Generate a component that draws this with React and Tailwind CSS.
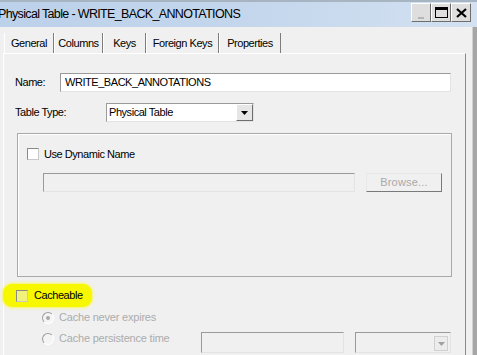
import React from "react";

// Classic sunken / raised edges used by the old Win32 dialog
const sunken = "border border-t-[#9a9a9a] border-l-[#9a9a9a] border-r-[#e3e3e3] border-b-[#e3e3e3]";
const raised = "border border-t-white border-l-white border-r-[#6e6e6e] border-b-[#6e6e6e]";

function CaptionButton({ children }) {
  return (
    <div className={`w-[20px] h-[19px] bg-[#dedede] flex items-center justify-center ${raised}`}>
      {children}
    </div>
  );
}

function Checkbox({ fill = "bg-white" }) {
  return (
    <span
      className={`inline-block w-[12px] h-[12px] shrink-0 ${fill} border border-t-[#8a8a8a] border-l-[#8a8a8a] border-r-[#c9c9c9] border-b-[#c9c9c9]`}
    />
  );
}

function Radio({ checked }) {
  return (
    <span className="w-[12px] h-[12px] shrink-0 rounded-full border border-t-[#9d9d9d] border-l-[#9d9d9d] border-r-white border-b-white bg-[#f4f4f4] flex items-center justify-center">
      {checked && <span className="w-[4px] h-[4px] rounded-full bg-[#a8a8a8]" />}
    </span>
  );
}

function DropArrow({ color = "#000" }) {
  return (
    <svg width="7" height="4" viewBox="0 0 7 4">
      <path d="M0 0h7L3.5 4z" fill={color} />
    </svg>
  );
}

const tabs = [
  { label: "General", w: "w-[50px]", active: true },
  { label: "Columns", w: "w-[49px]" },
  { label: "Keys", w: "w-[43px]" },
  { label: "Foreign Keys", w: "w-[73px]" },
  { label: "Properties", w: "w-[62px]" },
];

export default function App() {
  return (
    <div className="w-[477px] h-[355px] overflow-hidden bg-[#f0f0f0] flex flex-col font-['Liberation_Sans',Arial,sans-serif] text-[11px] tracking-[-0.45px] text-black">
      {/* title bar */}
      <div className="h-[27px] shrink-0 border-t-2 border-[#a7b4c2] bg-linear-to-r from-[#bcd1ea] via-[#c3d6ec] to-[#d3e1f1] flex justify-between">
        <span className="-ml-[2px] mt-[4px] text-[12.5px] tracking-[-0.65px] leading-[17px] whitespace-nowrap">
          Physical Table - WRITE_BACK_ANNOTATIONS
        </span>
        <div className="flex mt-[1px] mr-[6px]">
          <CaptionButton>
            <span className="mt-[10px] w-[6px] h-[2px] bg-[#b5b5b5]" />
          </CaptionButton>
          <CaptionButton>
            <span className="w-[13px] h-[11px] border border-black border-t-[3px]" />
          </CaptionButton>
          <CaptionButton>
            <svg width="11" height="10" viewBox="0 0 11 10">
              <path d="M1 1l9 8M10 1l-9 8" stroke="#000" strokeWidth="2.2" />
            </svg>
          </CaptionButton>
        </div>
      </div>

      <div className="flex flex-1">
        <div className="flex-1 flex flex-col pl-[3px] pr-[6px] pt-[6px]">
          {/* tabs */}
          <div className="flex h-[20px] pl-[1px]">
            {tabs.map((t) => (
              <div
                key={t.label}
                className={`${t.w} h-[20px] flex items-center justify-center border-l border-l-white border-r border-r-[#7d7d7d] ${
                  t.active ? "bg-[#f0f0f0]" : ""
                }`}
              >
                {t.label}
              </div>
            ))}
          </div>

          {/* tab page */}
          <div className="flex-1 border-t border-l border-white border-r border-r-[#8a8a8a] pl-[11px] pt-[19px]">
            <div className="flex items-center h-[19px]">
              <span className="w-[45px]">Name:</span>
              <div className={`w-[391px] h-[19px] bg-white flex items-center pl-[4px] ${sunken}`}>
                WRITE_BACK_ANNOTATIONS
              </div>
            </div>

            <div className="flex items-center h-[19px] mt-[11px]">
              <span className="w-[91px]">Table Type:</span>
              <div className={`w-[148px] h-[19px] bg-white flex items-center justify-between pl-[2px] ${sunken}`}>
                <span>Physical Table</span>
                <div className={`w-[17px] h-[17px] bg-[#e6e6e6] flex items-center justify-center ${raised}`}>
                  <DropArrow />
                </div>
              </div>
            </div>

            {/* group box */}
            <div className="ml-[2px] mt-[11px] w-[435px] h-[144px] border border-[#a9a9a9] shadow-[inset_1px_1px_0_#fff] pt-[14px] pl-[9px]">
              <label className="flex items-center gap-[5px] h-[12px]">
                <Checkbox />
                <span>Use Dynamic Name</span>
              </label>
              <div className="flex mt-[13px] pl-[16px] gap-[11px]">
                <div className={`w-[312px] h-[19px] bg-[#f0f0f0] ${sunken} border-t-[#8a8a8a] border-l-[#8a8a8a]`} />
                <div className="w-[76px] h-[19px] flex items-center justify-center text-[#a9a9a9] tracking-[0.2px] border border-t-[#e8e8e8] border-l-[#e8e8e8] border-r-[#7a7a7a] border-b-[#7a7a7a]">
                  Browse...
                </div>
              </div>
            </div>

            {/* cacheable, highlighted with a marker */}
            <div className="mt-[7px] -ml-[12px] w-[89px] h-[23px] rounded-[9px] bg-[#f7f700] flex items-center pl-[13px] gap-[6px] shadow-[0_0_3px_1px_#f8f860]">
              <Checkbox fill="bg-[#f2f27a]" />
              <span>Cacheable</span>
            </div>

            <div className="flex items-center h-[21px] pl-[27px] gap-[5px] text-[#acacac] tracking-[-0.2px]">
              <Radio checked />
              <span>Cache never expires</span>
            </div>
            <div className="flex h-[21px] pl-[27px] text-[#acacac] tracking-[-0.2px]">
              <div className="flex items-center gap-[5px] w-[159px] h-[21px]">
                <Radio />
                <span>Cache persistence time</span>
              </div>
              <div className={`mt-[4px] w-[143px] h-[21px] ${sunken} border-t-[#8a8a8a] border-l-[#8a8a8a]`} />
              <div
                className={`ml-[11px] mt-[4px] w-[96px] h-[21px] flex justify-end items-start pt-[3px] pr-[2px] ${sunken} border-t-[#8a8a8a] border-l-[#8a8a8a]`}
              >
                <div className="w-[14px] h-[15px] bg-[#ececec] border border-[#d0d0d0] flex items-center justify-center">
                  <DropArrow color="#a0a0a0" />
                </div>
              </div>
            </div>
          </div>
        </div>

        {/* window frame on the right */}
        <div className="w-[5px] bg-[#a6a6a6] border-l border-[#cfcfcf]" />
      </div>
    </div>
  );
}
